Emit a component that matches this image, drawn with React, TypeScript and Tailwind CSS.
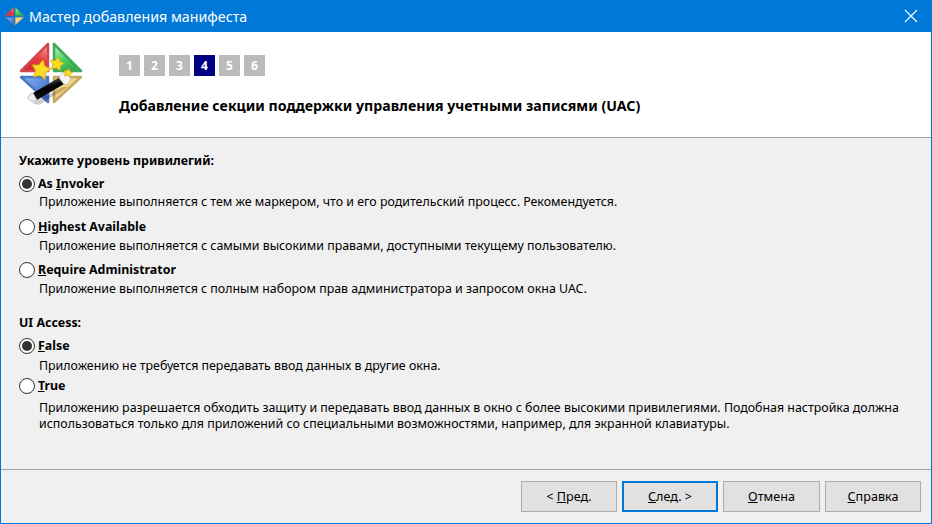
// Manifest wizard, step 4 of 6: the UAC section page.

const font = "font-['Noto_Sans','Open_Sans',sans-serif]";

function starPoints(cx: number, cy: number, r: number) {
  const pts: string[] = [];
  for (let i = 0; i < 10; i++) {
    const rad = i % 2 === 0 ? r : r * 0.52;
    const a = (Math.PI / 5) * i - Math.PI / 2 + 0.2;
    pts.push(`${cx + rad * Math.cos(a)},${cy + rad * Math.sin(a)}`);
  }
  return pts.join(" ");
}

function Gradients() {
  return (
    <defs>
      <linearGradient id="r" x1="0.8" y1="0" x2="0.3" y2="1">
        <stop offset="0" stopColor="#f7a0a0" />
        <stop offset="0.5" stopColor="#e8383c" />
        <stop offset="1" stopColor="#d42a30" />
      </linearGradient>
      <linearGradient id="g" x1="0.2" y1="0" x2="0.7" y2="1">
        <stop offset="0" stopColor="#b4f0bc" />
        <stop offset="0.55" stopColor="#48d060" />
        <stop offset="1" stopColor="#30a848" />
      </linearGradient>
      <linearGradient id="b" x1="0" y1="0" x2="1" y2="1">
        <stop offset="0" stopColor="#8cb4f0" />
        <stop offset="1" stopColor="#2f62c8" />
      </linearGradient>
      <linearGradient id="y" x1="0" y1="0" x2="1" y2="1">
        <stop offset="0" stopColor="#f8e0a0" />
        <stop offset="1" stopColor="#e8c060" />
      </linearGradient>
      <linearGradient id="wand" x1="0.6" y1="0" x2="0.9" y2="0.7">
        <stop offset="0" stopColor="#666" />
        <stop offset="0.5" stopColor="#000" />
        <stop offset="1" stopColor="#111" />
      </linearGradient>
    </defs>
  );
}

function Tiles({ stroke = 2.5 }: { stroke?: number }) {
  return (
    <g strokeWidth={stroke} strokeLinejoin="round">
      <path d="M29 2 L29 29 L2 29 Z" fill="url(#r)" stroke="#d04850" />
      <path d="M35 2 L35 29 L62 29 Z" fill="url(#g)" stroke="#40a858" />
      <path d="M29 35 L29 60 L2 35 Z" fill="url(#b)" stroke="#4a78c8" />
      <path d="M35 35 L35 60 L62 35 Z" fill="url(#y)" stroke="#c8a860" />
    </g>
  );
}

// small window icon: the four tiles only
function TitleIcon() {
  return (
    <svg width="19" height="19" viewBox="0 0 64 64">
      <Gradients />
      <Tiles stroke={3} />
    </svg>
  );
}

// big wizard icon: tiles, stars and the magic wand
function WizardIcon() {
  return (
    <svg width="64" height="64" viewBox="0 0 64 64" className="shrink-0">
      <Gradients />
      <Tiles />
      <path d="M13 61 L44 45 L49 45 L20 63 Z" fill="#000" opacity="0.2" />
      <path d="M14 51 L41 35 L45 42 L18 58 Z" fill="url(#wand)" />
      <path d="M40 36 C41 31 48 29 51 33 C53 37 50 43 45 42.5 Z" fill="#f4f4f4" stroke="#a8a8a8" strokeWidth="0.6" />
      <path d="M14 51 L18 58 C14 60 10 59 9 56.5 C8.5 54 11 52 14 51 Z" fill="#ececec" stroke="#999" strokeWidth="0.6" />
      <polygon points={starPoints(22, 28, 10.5)} fill="#fbdc20" stroke="#c8a018" strokeWidth="0.7" strokeLinejoin="round" />
      <polygon points={starPoints(38, 22, 7.5)} fill="#fbdc20" stroke="#c8a018" strokeWidth="0.7" strokeLinejoin="round" />
      <polygon points={starPoints(49, 31, 4.8)} fill="#fbdc20" stroke="#c8a018" strokeWidth="0.6" strokeLinejoin="round" />
    </svg>
  );
}

function Radio({ checked }: { checked?: boolean }) {
  return (
    <span className="flex h-4 w-4 shrink-0 items-center justify-center rounded-full border-[1.5px] border-[#333] bg-white">
      {checked && <span className="h-[10px] w-[10px] rounded-full bg-[#333]" />}
    </span>
  );
}

function Option({
  checked,
  before,
  mnemonic,
  after,
  children,
  className,
}: {
  checked?: boolean;
  before?: string;
  mnemonic: string;
  after: string;
  children: React.ReactNode;
  className?: string;
}) {
  return (
    <div className={className}>
      <div className="flex h-[18px] items-center gap-[3px] pl-[18px]">
        <Radio checked={checked} />
        <span className="text-[12.4px] leading-[18px] font-bold text-black">
          {before}
          <span className="underline">{mnemonic}</span>
          {after}
        </span>
      </div>
      <div className="mt-[2px] pl-[38px] text-[12.4px] leading-[16px] text-black">{children}</div>
    </div>
  );
}

function WizButton({
  before,
  mnemonic,
  after,
  active,
  className,
}: {
  before?: string;
  mnemonic: string;
  after: string;
  active?: boolean;
  className?: string;
}) {
  return (
    <div
      className={`flex h-[31px] items-center justify-center bg-[#e1e1e1] pt-[2px] text-[12.6px] text-black ${
        active ? "border-2 border-[#0078d7]" : "border border-[#adadad]"
      } ${className ?? "w-[96px]"}`}
    >
      <span className="whitespace-pre">
        {before}
        <span className="underline">{mnemonic}</span>
        {after}
      </span>
    </div>
  );
}

export default function App() {
  return (
    <div className={`flex h-[524px] w-[932px] flex-col border-x border-b border-[#0078d7] bg-[#f0f0f0] ${font}`}>
      <div className="-mx-px flex h-8 shrink-0 items-center bg-[#0078d7] pr-[14px] pl-[5px]">
        <TitleIcon />
        <span className="mt-[2px] ml-[5px] flex-1 text-[14.25px] text-white">Мастер добавления манифеста</span>
        <svg width="14" height="14" viewBox="0 0 14 14" stroke="white" strokeWidth="1.1">
          <path d="M1 1 L13 13 M13 1 L1 13" />
        </svg>
      </div>

      <div className="flex h-[106px] shrink-0 border-b border-[#a0a0a0] bg-white pt-[10px] pl-[18px]">
        <WizardIcon />
        <div className="ml-[36px] pt-[13px]">
          <div className="flex gap-[4px]">
            {[1, 2, 3, 4, 5, 6].map((n) => (
              <span
                key={n}
                className={`flex h-[21px] w-[21px] items-center justify-center text-[12px] font-bold text-white ${
                  n === 4 ? "bg-[#000080]" : "bg-[#bbbbbb]"
                }`}
              >
                {n}
              </span>
            ))}
          </div>
          <div className="mt-[20px] text-[14.16px] leading-[20px] font-bold text-black">
            Добавление секции поддержки управления учетными записями (UAC)
          </div>
        </div>
      </div>

      <div className="flex-1 pt-[14px]">
        <div className="pl-[18px] text-[12.4px] leading-[18px] font-bold text-black">Укажите уровень привилегий:</div>
        <Option className="mt-[5px]" checked before="As " mnemonic="I" after="nvoker">
          <div className="-mt-px">
            Приложение выполняется с тем же маркером, что и его родительский процесс. Рекомендуется.
          </div>
        </Option>
        <Option className="mt-[8px]" mnemonic="H" after="ighest Available">
          Приложение выполняется с самыми высокими правами, доступными текущему пользователю.
        </Option>
        <Option className="mt-[7px]" mnemonic="R" after="equire Administrator">
          Приложение выполняется с полным набором прав администратора и запросом окна UAC.
        </Option>
        <div className="mt-[17px] pl-[18px] text-[12.4px] leading-[18px] font-bold text-black">UI Access:</div>
        <Option className="mt-[5px]" checked mnemonic="F" after="alse">
          <div className="mt-[3px]">Приложению не требуется передавать ввод данных в другие окна.</div>
        </Option>
        <Option className="mt-[3px]" mnemonic="T" after="rue">
          <div className="mt-[5px] w-[880px]">
            Приложению разрешается обходить защиту и передавать ввод данных в окно с более высокими привилегиями. Подобная настройка должна
            использоваться только для приложений со специальными возможностями, например, для экранной клавиатуры.
          </div>
        </Option>
      </div>

      <div className="flex h-[54px] shrink-0 items-start justify-end gap-[5px] border-t border-[#a0a0a0] pt-[11px] pr-[10px]">
        <WizButton before="< " mnemonic="П" after="ред." />
        <WizButton mnemonic="С" after="лед. >" active />
        <WizButton mnemonic="О" after="тмена" className="w-[97px]" />
        <WizButton mnemonic="С" after="правка" />
      </div>
    </div>
  );
}
